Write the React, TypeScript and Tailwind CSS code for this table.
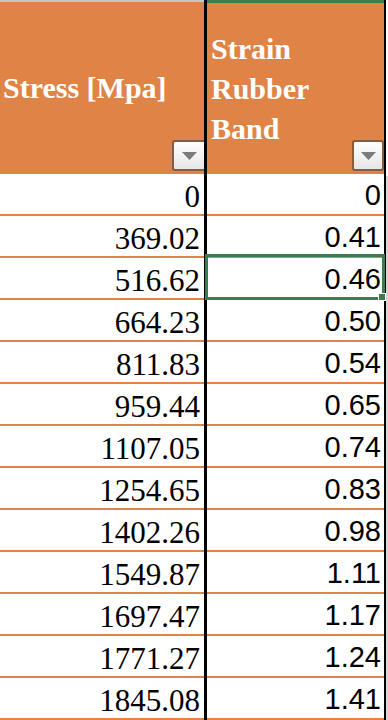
const STRESS = ['0', '369.02', '516.62', '664.23', '811.83', '959.44', '1107.05', '1254.65', '1402.26', '1549.87', '1697.47', '1771.27', '1845.08'];
const STRAIN = ['0', '0.41', '0.46', '0.50', '0.54', '0.65', '0.74', '0.83', '0.98', '1.11', '1.17', '1.24', '1.41'];

const SELECTED = 2;

function FilterButton({ className }: { className: string }) {
  return (
    <div
      className={`absolute w-[32px] h-[31px] rounded-[3px] border-2 border-[#8f5a36] bg-gradient-to-b from-white to-[#e6e6e6] flex items-center justify-center ${className}`}
    >
      <svg width="15" height="8" viewBox="0 0 15 8">
        <polygon points="0,0 15,0 7.5,8" fill="#7b7b7b" />
      </svg>
    </div>
  );
}

export default function App() {
  return (
    <div className="w-[388px] h-[720px] overflow-hidden bg-white flex">
      {/* stress column */}
      <div className="w-[204px] flex flex-col shrink-0">
        <div className="relative h-[176px] border-t-2 border-[#c4c4c4] bg-[#df8346] flex items-center pl-[3px]">
          <span className="font-['Liberation_Serif',serif] font-bold text-[30px] leading-[40px] text-white whitespace-nowrap">
            Stress [Mpa]
          </span>
          <FilterButton className="right-0 top-[138px] rounded-r-none border-r-0" />
        </div>
        {STRESS.map((v) => (
          <div
            key={v}
            className="h-[42px] shrink-0 border-b-2 border-[#df8346] flex items-end justify-end pr-[4px] pb-[2px]"
          >
            <span className="font-['Liberation_Serif',serif] text-[31px] leading-[31px] text-black">{v}</span>
          </div>
        ))}
      </div>

      {/* strain column */}
      <div className="w-[182px] shrink-0 flex flex-col border-l-[3px] border-r-2 border-black">
        <div className="relative h-[176px] border-t-[3px] border-[#3e7b4f] bg-[#df8346] flex items-center pl-[4px]">
          <span className="font-['Liberation_Serif',serif] font-bold text-[30px] leading-[40px] text-white">
            Strain
            <br />
            Rubber
            <br />
            Band
          </span>
          <FilterButton className="right-0 top-[137px]" />
        </div>
        {STRAIN.map((v, i) => (
          <div
            key={v}
            className="relative h-[42px] shrink-0 border-b-2 border-[#df8346] flex items-end justify-end pr-[3px] pb-[4px]"
          >
            <span className="font-['Liberation_Sans',sans-serif] text-[29px] leading-[29px] text-black">{v}</span>
            {i === SELECTED && (
              <div className="absolute -left-[2px] -top-[4px] -right-px -bottom-[2px] border-[3px] border-[#3e7b4f]">
                <div className="absolute -right-[4px] -bottom-[4px] w-[8px] h-[8px] bg-[#3e7b4f] border border-white" />
              </div>
            )}
          </div>
        ))}
      </div>

      {/* sheet edge */}
      <div className="flex-1 flex flex-col">
        <div className="h-[176px] bg-white" />
        <div className="flex-1 bg-[#d6d6d6]" />
      </div>
    </div>
  );
}
